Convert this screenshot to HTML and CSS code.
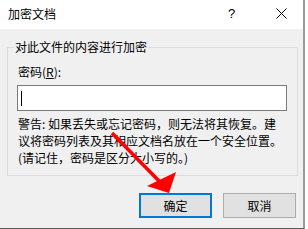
FILE: index.html
```html
<!DOCTYPE html>
<html>
    <head>
        <title>加密文档</title>
        <meta charset="utf-8"/>
        <link rel="stylesheet" href="styles.css">
    </head>
    <body>
        <div id="dialog">
            <div class="titlebar">
                <span class="title">加密文档</span>
                <span class="help">?</span>
                <span class="close">
                    <svg width="11" height="11" viewBox="0 0 11 11"><path d="M0.5 0.5 L10.5 10.5 M10.5 0.5 L0.5 10.5" stroke="#000" stroke-width="1" fill="none"/></svg>
                </span>
            </div>
            <div class="body">
                <fieldset class="group">
                    <legend>对此文件的内容进行加密</legend>
                    <div class="label">密码(<u>R</u>):</div>
                    <div class="input"><i class="caret"></i></div>
                    <p class="warn">警告: 如果丢失或忘记密码，则无法将其恢复。建<br>议将密码列表及其相应文档名放在一个安全位置。<br>(请记住，密码是区分大小写的。)</p>
                </fieldset>
                <div class="buttons">
                    <div class="btn ok">确定</div>
                    <div class="btn">取消</div>
                </div>
            </div>
            <svg class="arrow" width="308" height="229" viewBox="0 0 308 229">
                <line x1="112" y1="133" x2="160" y2="182" stroke="#f00" stroke-width="3.5"/>
                <polygon points="147,186 176,172 169,193" fill="#f00"/>
            </svg>
        </div>
    </body>
</html>
```

FILE: styles.css
```css
*{
    margin: 0;
    padding: 0;
    box-sizing: border-box;
}
body{
    background-color: #fff;
    font-family: "Noto Sans CJK SC", "Liberation Sans", sans-serif;
    font-size: 12px;
    color: #000;
}
#dialog{
    width: 305px;
    height: 229px;
    position: relative;
    background-color: #f0f0f0;
    border-right: 2px solid #9a9a9a;
    border-bottom: 1px solid #5a5a5a;
}
#dialog .titlebar{
    height: 29px;
    background-color: #fff;
    display: flex;
    align-items: center;
    padding-left: 8px;
}
#dialog .title{
    flex: 1;
    line-height: 16px;
    margin-top: -1px;
}
#dialog .help{
    width: 10px;
    font-size: 13px;
    font-family: "Liberation Sans", sans-serif;
    margin-right: 38px;
    margin-top: -2px;
}
#dialog .close{
    display: flex;
    width: 11px;
    margin-right: 16px;
    margin-top: -2px;
}
#dialog .body{
    padding: 10px 6px 0 7px;
}
#dialog .group{
    border: 1px solid #dcdcdc;
    padding: 0 10px 9px 10px;
    width: 291px;
}
#dialog .group legend{
    margin-left: -4px;
    padding: 0 1px;
    line-height: 16px;
}
#dialog .label{
    line-height: 16px;
    margin-top: 9px;
}
#dialog .label u{
    text-decoration-thickness: 1px;
    text-underline-offset: 1px;
}
#dialog .input{
    width: 270px;
    height: 26px;
    margin: 5px 0 0 -1px;
    background-color: #fff;
    border: 1px solid #7a7a7a;
    display: flex;
    align-items: center;
    padding-left: 3px;
}
#dialog .caret{
    display: block;
    width: 1px;
    height: 15px;
    background-color: #000;
}
#dialog .warn{
    line-height: 17px;
    margin-top: 4px;
    white-space: nowrap;
}
#dialog .buttons{
    display: flex;
    justify-content: flex-end;
    gap: 11px;
    margin-top: 17px;
    padding-right: 1px;
}
#dialog .btn{
    width: 73px;
    height: 25px;
    background-color: #e1e1e1;
    border: 1px solid #adadad;
    display: flex;
    align-items: center;
    justify-content: center;
}
#dialog .btn.ok{
    border: 2px solid #0078d7;
}
#dialog .arrow{
    position: absolute;
    left: 0;
    top: 0;
    pointer-events: none;
}
```
